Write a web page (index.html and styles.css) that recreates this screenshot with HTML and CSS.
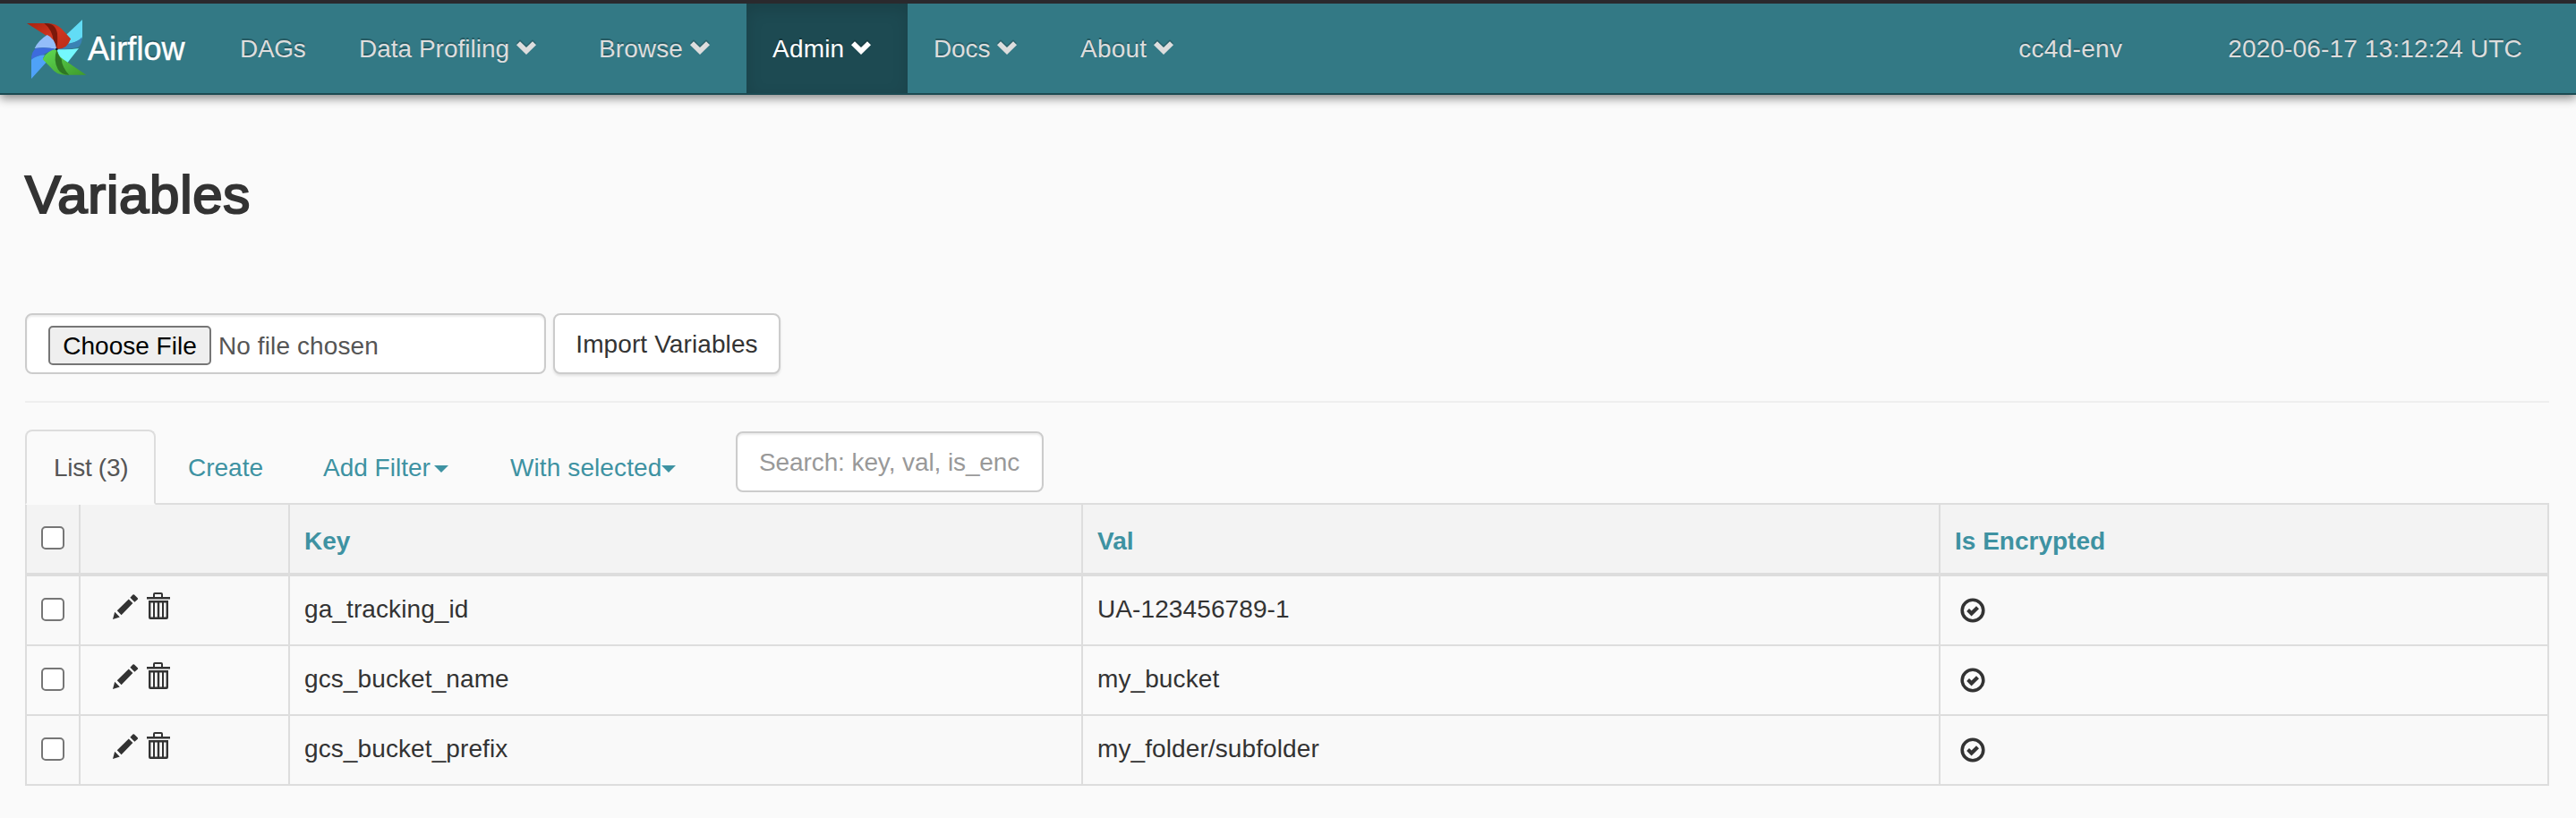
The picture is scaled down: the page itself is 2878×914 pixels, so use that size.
FILE: index.html
```html
<!DOCTYPE html>
<html lang="en">
<head>
<meta charset="utf-8">
<title>Airflow - Variables</title>
<link rel="stylesheet" href="styles.css">
</head>
<body>
<svg class="defs" width="0" height="0" aria-hidden="true">
  <defs>
    <linearGradient id="red" x1="0" y1="0" x2="1" y2="1"><stop offset="0" stop-color="#a8230f"/><stop offset=".5" stop-color="#cf3520"/><stop offset="1" stop-color="#b82c18"/></linearGradient>
    <linearGradient id="green" x1="0" y1="0" x2="1" y2="1"><stop offset="0" stop-color="#5fdb52"/><stop offset="1" stop-color="#3f9a2c"/></linearGradient>
    <symbol id="chevron" viewBox="0 0 22 16"><path d="M0 5.3 4 1.2 11 8 18 1.2 22 5.3 11 16Z"/></symbol>
    <symbol id="pencil" viewBox="0 0 30 30"><path d="M1 29 3.2 20.8 8.8 26.6ZM5.8 19.2 18.8 6.4 23.4 11 10.6 24.2ZM20.4 4.8 23.4 1.6Q24.2.8 25 1.4L28.6 5Q29.6 6 28.8 6.8L25.4 9.8Z"/></symbol>
    <symbol id="trash" viewBox="0 0 26 30"><path d="M0 5H7V2Q7 0 9 0H16Q18 0 18 2V5H26V7.4H0ZM9 5H16V2H9Z" fill-rule="evenodd"/><path d="M2 9H24V28Q24 30 22 30H4Q2 30 2 28ZM4.4 11.4V27.6H7V11.4ZM9 11.4V27.6H11.8V11.4ZM14.2 11.4V27.6H17V11.4ZM19 11.4V27.6H21.6V11.4Z" fill-rule="evenodd"/></symbol>
    <symbol id="ok" viewBox="0 0 28 28"><circle cx="14" cy="14" r="11.8" fill="none" stroke="#333" stroke-width="3.6"/><path d="M7.2 15 10 12 12.6 14.4 18 9.2 21 12.2 12.6 20.4Z"/></symbol>
  </defs>
</svg>
<nav class="navbar">
  <a class="brand">
    <svg class="logo" viewBox="90 66 201 198">
      <path fill="#62dcf5" d="M276 66V128Q256 142 222 150L236 132 216 122Z"/>
      <path fill="#3a82b4" d="M275 124Q276 148 262 158Q232 166 190 165Q210 148 238 144Q262 140 275 124Z"/>
      <path fill="#74f8fd" d="M190 165Q230 168 264 162L224 213Q202 208 190 165Z"/>
      <path fill="url(#red)" d="M90 78H160Q188 78 206 96L237 130Q226 166 190 165Q182 160 180 150L156 120Z"/>
      <path fill="#7c180b" d="M148 78Q186 76 192 112Q194 145 190 163Q180 156 180 140Q176 100 148 78Z"/>
      <path fill="#93bdf9" d="M116 162Q128 136 158 117Q184 128 190 165Q150 156 116 162Z"/>
      <path fill="#3d6bdd" d="M105 202Q104 174 120 162Q156 156 190 165Q164 170 144 184Q118 188 105 202Z"/>
      <path fill="#4fa2f8" d="M105 264V200Q122 186 150 184L144 196 156 208Z"/>
      <path fill="url(#green)" d="M190 165Q158 168 143 199L172 228Q188 250 216 251H289L212 199Q196 190 190 165Z"/>
      <path fill="#2e7624" d="M190 166Q178 204 194 232Q206 252 232 251Q208 226 206 197Q194 186 190 166Z"/>
      <circle cx="190" cy="165" r="4" fill="#0a1a2c"/>
    </svg>
    <span>Airflow</span>
  </a>
  <ul class="menu">
    <li class="dags">DAGs</li>
    <li class="profiling">Data Profiling<svg class="chevron"><use href="#chevron"/></svg></li>
    <li class="browse">Browse<svg class="chevron"><use href="#chevron"/></svg></li>
    <li class="admin active">Admin<svg class="chevron"><use href="#chevron"/></svg></li>
    <li class="docs">Docs<svg class="chevron"><use href="#chevron"/></svg></li>
    <li class="about">About<svg class="chevron"><use href="#chevron"/></svg></li>
  </ul>
  <span class="env">cc4d-env</span>
  <span class="clock">2020-06-17 13:12:24 UTC</span>
</nav>
<main class="page">
  <h2 class="title">Variables</h2>
  <form class="import">
    <div class="file"><span class="choose">Choose File</span><span class="none">No file chosen</span></div>
    <button class="submit" type="button">Import Variables</button>
  </form>
  <hr class="rule">
  <div class="tabs">
    <a class="tab current">List (3)</a>
    <a class="tab create">Create</a>
    <a class="tab filter">Add Filter<i class="caret"></i></a>
    <a class="tab selected">With selected<i class="caret"></i></a>
    <input class="search" type="text" placeholder="Search: key, val, is_enc">
  </div>
  <table class="list">
    <colgroup><col class="c-check"><col class="c-actions"><col class="c-key"><col class="c-val"><col class="c-enc"></colgroup>
    <thead>
      <tr><th><span class="box"></span></th><th></th><th>Key</th><th>Val</th><th>Is Encrypted</th></tr>
    </thead>
    <tbody>
      <tr><td><span class="box"></span></td><td><span class="actions"><svg class="pencil"><use href="#pencil"/></svg><svg class="trash"><use href="#trash"/></svg></span></td><td>ga_tracking_id</td><td>UA-123456789-1</td><td><svg class="ok"><use href="#ok"/></svg></td></tr>
      <tr><td><span class="box"></span></td><td><span class="actions"><svg class="pencil"><use href="#pencil"/></svg><svg class="trash"><use href="#trash"/></svg></span></td><td>gcs_bucket_name</td><td>my_bucket</td><td><svg class="ok"><use href="#ok"/></svg></td></tr>
      <tr><td><span class="box"></span></td><td><span class="actions"><svg class="pencil"><use href="#pencil"/></svg><svg class="trash"><use href="#trash"/></svg></span></td><td>gcs_bucket_prefix</td><td>my_folder/subfolder</td><td><svg class="ok"><use href="#ok"/></svg></td></tr>
    </tbody>
  </table>
</main>
</body>
</html>
```
FILE: styles.css
```css
* { box-sizing: border-box; }
html { background: #fafafa; }
body {
  margin: 0;
  height: 914px;
  overflow: hidden;
  background: #fafafa;
  color: #333;
  font: 28px/40px "Liberation Sans", Arial, sans-serif;
}
.defs { display: block; height: 0; }
svg { fill: currentColor; flex: none; }

.navbar {
  display: flex;
  height: 106px;
  border-top: 4px solid #2a292d;
  border-bottom: 2px solid #1c4a52;
  background: #337985;
  box-shadow: 0 4px 10px rgba(0, 0, 0, .45);
  color: #ddd;
  line-height: 101px;
  text-shadow: 0 -2px 0 rgba(0, 0, 0, .25);
  white-space: nowrap;
}
.brand {
  display: flex;
  width: 238px;
  padding-left: 30px;
  color: #fff;
  font-size: 36px;
  -webkit-text-stroke: .4px #fff;
}
.logo { width: 67px; height: 66px; margin-top: 18px; }
.brand span { margin-left: 1px; letter-spacing: .1px; }
.menu { display: flex; margin: 0; padding: 0; list-style: none; }
.menu li { display: flex; height: 100px; padding-left: 30px; }
.menu .dags { width: 133px; letter-spacing: -.3px; }
.profiling { width: 268px; }
.browse { width: 195px; letter-spacing: .1px; }
.menu .admin { width: 180px; padding-left: 29px; letter-spacing: .2px; }
.menu .docs { width: 164px; padding-left: 29px; letter-spacing: -.1px; }
.menu .about { padding-left: 29px; letter-spacing: .2px; }
.menu .active {
  background: #1d4a52;
  box-shadow: inset 0 6px 18px rgba(0, 0, 0, .13);
  color: #fff;
}
.chevron {
  width: 22px;
  height: 16px;
  margin: 41px 0 0 8px;
  filter: drop-shadow(0 -2px 0 rgba(0, 0, 0, .2));
}
.env { margin-left: auto; letter-spacing: .3px; }
.clock { margin: 0 60px 0 118px; letter-spacing: .15px; }

.page { padding: 0 30px 0 28px; }
.title {
  height: 244px;
  margin: 0;
  padding-top: 77px;
  font-size: 60px;
  font-weight: 400;
  letter-spacing: .7px;
  line-height: 70px;
  -webkit-text-stroke: 2.2px #333;
}
.import { display: flex; gap: 8px; height: 98px; }
.file {
  display: flex;
  width: 582px;
  height: 68px;
  padding: 12px 24px;
  border: 2px solid #ccc;
  border-radius: 8px;
  background: #fff;
  box-shadow: inset 0 2px 2px rgba(0, 0, 0, .075);
  color: #555;
  line-height: 45px;
}
.choose {
  width: 182px;
  height: 44px;
  margin-right: 8px;
  border: 2px solid #767676;
  border-radius: 5px;
  background: #efefef;
  color: #000;
  line-height: 41px;
  text-align: center;
}
.none { letter-spacing: .1px; }
.submit {
  width: 254px;
  height: 68px;
  padding: 1px 0 0;
  border: 2px solid #ccc;
  border-radius: 8px;
  background: #fff;
  box-shadow: 0 2px 3px rgba(0, 0, 0, .1);
  color: #333;
  font: inherit;
  letter-spacing: .1px;
}
.rule { height: 2px; margin: 0 0 30px; border: 0; background: #eee; }

.tabs { display: flex; height: 84px; border-bottom: 2px solid #ddd; white-space: nowrap; }
.tab { display: flex; padding-top: 23px; color: #3e92a2; }
.current {
  width: 146px;
  height: 84px;
  padding: 21px 0 0 30px;
  border: 2px solid #ddd;
  border-bottom-color: #fafafa;
  border-radius: 8px 8px 0 0;
  color: #555;
  letter-spacing: -.3px;
}
.create { width: 187px; padding-left: 36px; }
.filter { width: 209px; }
.selected { width: 252px; letter-spacing: .1px; }
.caret {
  height: 8px;
  margin: 17px 0 0 4px;
  border: solid transparent;
  border-width: 8px 8px 0;
  border-top-color: #3e92a2;
}
.selected .caret { margin-left: 0; }
.search {
  width: 344px;
  height: 68px;
  margin-top: 2px;
  padding: 1px 24px 0;
  border: 2px solid #ccc;
  border-radius: 8px;
  background: #fff;
  box-shadow: inset 0 2px 2px rgba(0, 0, 0, .075);
  font: inherit;
  letter-spacing: -.1px;
}
.search::placeholder { color: #999; opacity: 1; }

.list { width: 2820px; table-layout: fixed; border-spacing: 0; }
.c-check { width: 60px; }
.c-actions { width: 234px; }
.c-key { width: 886px; }
.c-val { width: 958px; }
.c-enc { width: 682px; }
th, td {
  height: 78px;
  padding: 17px 16px 0;
  border: solid #ddd;
  border-width: 0 0 2px 2px;
  text-align: left;
  vertical-align: top;
}
td { letter-spacing: .1px; }
th:last-child, td:last-child { border-right-width: 2px; }
th {
  height: 80px;
  padding-top: 21px;
  border-bottom-width: 4px;
  background: #f3f3f3;
  color: #3e92a2;
}
tr:nth-child(odd) td { background: #f9f9f9; }
.box {
  display: block;
  width: 26px;
  height: 26px;
  margin-top: 7px;
  border: 2px solid #767676;
  border-radius: 5px;
  background: #fff;
}
th .box { margin-top: 3px; }
.actions { display: flex; padding: 1px 0 0 19px; }
.pencil { width: 30px; height: 30px; margin-top: 1px; }
.trash { width: 26px; height: 30px; margin-left: 9px; }
.ok { display: block; width: 28px; height: 28px; margin: 7px 0 0 6px; }
```
